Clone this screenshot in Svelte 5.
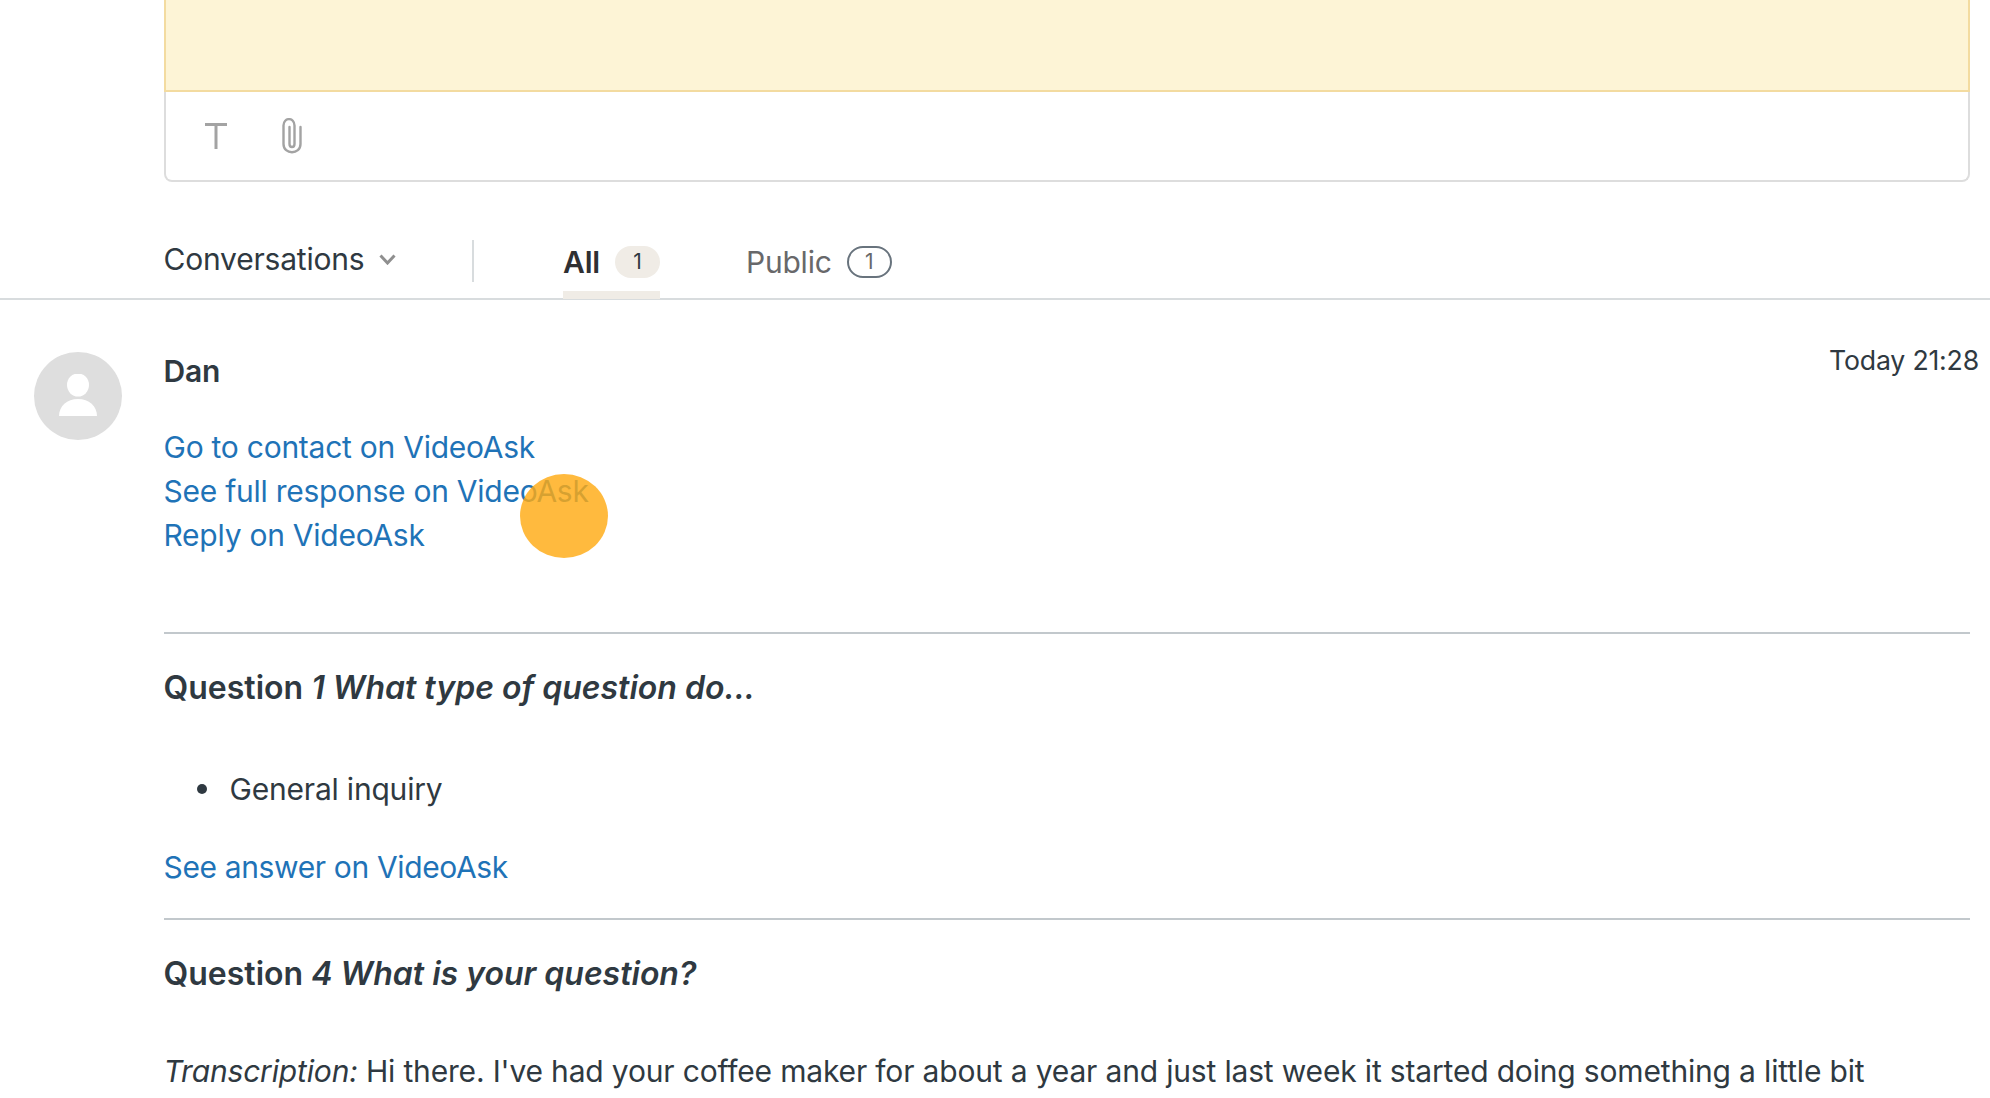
<script>
	const links = ['Go to contact on VideoAsk', 'See full response on VideoAsk', 'Reply on VideoAsk'];
</script>

<div class="page">
	<div class="composer">
		<div class="note"></div>
		<div class="toolbar">
			<svg width="22" height="26" viewBox="0 0 22 26"><path d="M0 1.500h22M11 1.500V26" fill="none" stroke="#a3a3a3" stroke-width="3"/></svg>
			<svg width="20" height="36" viewBox="0 0 20 36"><path d="M7.500 9v17c0 4 5 4 5 0V7.500c0-8.500-11-8.500-11 0V26c0 11 17 11 17 0V9" fill="none" stroke="#a3a3a3" stroke-width="2.400" stroke-linecap="round"/></svg>
		</div>
	</div>

	<div class="tabs">
		<div class="filter">
			<span>Conversations</span>
			<svg width="17" height="11" viewBox="0 0 17 11"><path d="M1.500 1.500 8.500 9l7-7.500" fill="none" stroke="#8f8f8f" stroke-width="3"/></svg>
		</div>
		<div class="sep"></div>
		<div class="tab active">All <span class="count">1</span></div>
		<div class="tab">Public <span class="count outline">1</span></div>
	</div>

	<div class="message">
		<div class="avatar">
			<svg width="40" height="44" viewBox="0 0 40 44"><ellipse cx="20" cy="11" rx="11" ry="11.500" fill="#fff"/><path d="M1 42c0-10 8-17 19-17s19 7 19 17z" fill="#fff"/></svg>
		</div>
		<div class="body">
			<div class="head">
				<span class="name">Dan</span>
				<span class="time">Today 21:28</span>
			</div>
			<div class="links">
				{#each links as l}
					<a href="#top">{l}</a>
				{/each}
				<span class="cursor"></span>
			</div>
			<hr class="first" />
			<h3>Question <em>1 What type of question do...</em></h3>
			<ul><li>General inquiry</li></ul>
			<a class="answer" href="#top">See answer on VideoAsk</a>
			<hr class="second" />
			<h3>Question <em>4 What is your question?</em></h3>
			<p><em>Transcription:</em> Hi there. I've had your coffee maker for about a year and just last week it started doing something a little bit</p>
		</div>
	</div>
</div>

<style>
	:global(body) {
		background: #fff;
		overflow: hidden;
	}

	.page {
		height: 1098px;
		overflow: hidden;
		font-family: Inter, "Noto Sans", sans-serif;
		color: #2f3941;
		font-size: 30px;
		letter-spacing: -0.2px;
	}

	.composer {
		margin: 0 20px 0 164px;
		height: 182px;
		box-sizing: border-box;
		border: solid #ddd;
		border-width: 0 2px 2px;
		border-radius: 0 0 8px 8px;
	}

	.note {
		height: 92px;
		box-sizing: border-box;
		margin: 0 -2px;
		background: #fdf4d6;
		border: solid #f3dba0;
		border-width: 0 2px 2px;
	}

	.toolbar {
		display: flex;
		align-items: center;
		height: 88px;
		padding-left: 39px;
		gap: 55px;
	}

	.tabs {
		display: flex;
		align-items: center;
		height: 118px;
		box-sizing: border-box;
		padding: 57px 0 0 163.500px;
		border-bottom: 2px solid #d8dcde;
	}

	.filter {
		display: flex;
		align-items: center;
		gap: 15px;
		width: 308.500px;
		margin-top: -19px;
	}

	.sep {
		width: 2px;
		height: 42px;
		background: #d8dcde;
		margin-right: 89px;
		margin-top: -16px;
	}

	.tab {
		display: flex;
		align-items: center;
		gap: 15px;
		color: #68686a;
		height: 59px;
		margin-right: 86px;
		padding-bottom: 16px;
		box-sizing: border-box;
		margin-bottom: -2px;
	}

	.tab.active {
		color: #2f3033;
		font-weight: 600;
		border-bottom: 8px solid #f0ece6;
		padding-bottom: 8px;
	}

	.count {
		display: inline-block;
		box-sizing: border-box;
		width: 45px;
		height: 32px;
		line-height: 32px;
		border-radius: 16px;
		text-align: center;
		font-size: 21px;
		font-weight: 400;
		background: #f0ece6;
		color: #2f3941;
	}

	.count.outline {
		background: none;
		border: 2px solid #68737d;
		line-height: 28px;
		color: #68686a;
	}

	.message {
		display: flex;
		padding-top: 52px;
	}

	.avatar {
		flex: none;
		width: 88px;
		height: 88px;
		margin: 0 41.500px 0 34px;
		border-radius: 50%;
		background: #dedede;
		display: flex;
		align-items: center;
		justify-content: center;
	}

	.body {
		flex: 1;
		margin-right: 20px;
		min-width: 0;
	}

	.head {
		display: flex;
		justify-content: space-between;
		align-items: flex-start;
		height: 73px;
		margin-right: -9px;
	}

	.name {
		font-weight: 600;
		margin-top: 1px;
	}

	.time {
		font-size: 26.700px;
		margin-top: -8px;
	}

	.links {
		position: relative;
		display: flex;
		flex-direction: column;
		line-height: 44px;
		letter-spacing: -0.250px;
	}

	a {
		color: #1f73b7;
		text-decoration: none;
	}

	.cursor {
		position: absolute;
		left: 356.500px;
		top: 49px;
		width: 88px;
		height: 84px;
		border-radius: 50%;
		background: rgba(255, 171, 20, 0.82);
	}

	hr {
		border: 0;
		border-top: 2px solid #c2c8cc;
		margin: 0;
	}

	hr.first {
		margin-top: 75px;
	}

	h3 {
		margin: 34px 0 0;
		font-size: 32px;
		font-weight: 600;
		line-height: 40px;
		letter-spacing: 0;
	}

	ul {
		margin: 59px 0 0;
		padding: 0 0 0 66px;
		line-height: 44px;
		list-style: none;
	}

	li {
		position: relative;
	}

	li::before {
		content: '';
		position: absolute;
		left: -33px;
		top: 17px;
		width: 10px;
		height: 10px;
		border-radius: 50%;
		background: #2f3941;
	}

	.answer {
		display: block;
		margin-top: 34px;
		line-height: 44px;
		letter-spacing: -0.360px;
	}

	hr.second {
		margin-top: 29px;
	}

	p {
		margin: 55px 0 0;
		line-height: 44px;
		white-space: nowrap;
		letter-spacing: -0.170px;
	}
</style>
